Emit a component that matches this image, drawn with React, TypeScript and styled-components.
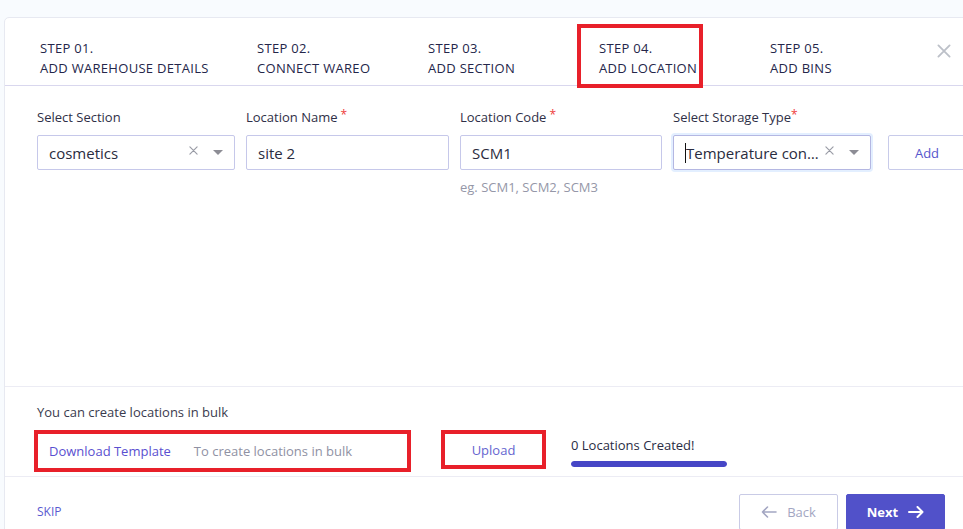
import React from 'react';
import styled, { createGlobalStyle } from 'styled-components';

const GlobalStyle = createGlobalStyle`
  html, body {
    margin: 0;
    padding: 0;
    background: #f8fbfe;
    overflow: hidden;
    font-family: "Open Sans", "Noto Sans", sans-serif;
  }
  *, *::before, *::after { box-sizing: border-box; }
`;

const Page = styled.div`
  width: 963px;
  height: 529px;
  padding: 17px 0 0 4px;
  overflow: hidden;
`;

const Card = styled.div`
  width: 1010px;
  background: #fff;
  border: 1px solid #e7e9f1;
  border-radius: 5px;
`;

const StepBar = styled.div`
  position: relative;
  display: grid;
  grid-template-columns: 217px repeat(4, 171px);
  align-items: start;
  padding: 20px 62px 7px 35px;
  border-bottom: 1px solid #d9d7ee;
`;

const Step = styled.div<{ $active?: boolean }>`
  position: relative;
  font-size: 13px;
  line-height: 20px;
  letter-spacing: 0.3px;
  color: #24264a;
  text-transform: uppercase;
  white-space: nowrap;
  &::after {
    content: '';
    display: ${p => (p.$active ? 'block' : 'none')};
    position: absolute;
    left: -22px;
    top: -14px;
    width: 126px;
    height: 64px;
    border: 4px solid #e8202a;
  }
`;

const Close = styled.button`
  position: absolute;
  top: 26px;
  right: 62px;
  padding: 0;
  border: none;
  background: none;
  display: flex;
`;

const FormSection = styled.div`
  height: 301px;
  padding: 22px 0 0 32px;
  border-bottom: 1px solid #ececf4;
`;

const FieldRow = styled.div`
  display: grid;
  grid-template-columns: 198px 203px 202px 198px auto;
  column-gap: 11px;
  align-items: start;
`;

const Field = styled.div`
  display: flex;
  flex-direction: column;
`;

const Label = styled.label`
  font-size: 13px;
  line-height: 18px;
  color: #2f3047;
  margin-bottom: 9px;
  white-space: nowrap;
`;

const Required = styled.span<{ $tight?: boolean }>`
  color: #ee3b3b;
  font-size: 12px;
  vertical-align: top;
  margin-left: ${p => (p.$tight ? '0' : '3px')};
  line-height: 14px;
`;

const InputBox = styled.div<{ $focused?: boolean }>`
  height: 35px;
  display: flex;
  align-items: center;
  padding: 0 10px 0 11px;
  border: 1px solid ${p => (p.$focused ? '#b4b7e2' : '#c6c8ea')};
  border-radius: 2px;
  background: #fff;
  box-shadow: ${p => (p.$focused ? '0 0 0 2px #e3efff' : 'none')};
  font-size: 15px;
  color: #2a2c40;
`;

const Value = styled.span<{ $caret?: boolean }>`
  flex: 1;
  min-width: 0;
  white-space: nowrap;
  overflow: hidden;
  text-overflow: ellipsis;
  border-left: ${p => (p.$caret ? '1px solid #111' : 'none')};
  line-height: 20px;
`;

const Clear = styled.span`
  display: flex;
  margin: -4px 15px 0 4px;
`;

const Caret = styled.span`
  width: 0;
  height: 0;
  border-left: 5px solid transparent;
  border-right: 5px solid transparent;
  border-top: 5px solid #8d8d95;
  margin-right: 1px;
`;

const Hint = styled.div`
  margin-top: 9px;
  font-size: 13px;
  line-height: 16px;
  color: #9597a8;
`;

const AddButton = styled.button`
  margin-left: 6px;
  margin-top: 27px;
  width: 78px;
  height: 35px;
  border: 1px solid #c8cbea;
  border-radius: 2px;
  background: #fff;
  color: #5656cc;
  font-family: inherit;
  font-size: 13px;
`;

const BulkSection = styled.div`
  height: 90px;
  padding: 16px 0 0 32px;
  border-bottom: 1px solid #ececf4;
`;

const BulkTitle = styled.div`
  font-size: 13px;
  line-height: 18px;
  color: #3a3b4e;
  margin-bottom: 9px;
`;

const BulkRow = styled.div`
  display: flex;
  align-items: flex-start;
  margin-left: -3px;
`;

const TemplateBox = styled.div<{ $marked?: boolean }>`
  width: 377px;
  height: 42px;
  display: flex;
  align-items: center;
  gap: 23px;
  padding: 0 0 0 11px;
  border: 4px solid ${p => (p.$marked ? '#e8202a' : 'transparent')};
  font-size: 13px;
`;

const LinkText = styled.span`
  color: #5a4fd0;
`;

const MutedText = styled.span`
  color: #8f91a3;
`;

const UploadBox = styled.button<{ $marked?: boolean }>`
  width: 105px;
  height: 39px;
  margin-left: 30px;
  border: 4px solid ${p => (p.$marked ? '#e8202a' : 'transparent')};
  background: #fff;
  color: #6565cf;
  font-family: inherit;
  font-size: 13px;
  padding: 0;
`;

const Progress = styled.div`
  margin-left: 25px;
  margin-top: 6px;
  width: 156px;
`;

const ProgressLabel = styled.div`
  font-size: 13px;
  line-height: 18px;
  color: #2a2c44;
`;

const Track = styled.div`
  margin-top: 7px;
  height: 6px;
  border-radius: 3px;
  background: #e5e5f5;
  overflow: hidden;
`;

const Fill = styled.div`
  height: 100%;
  border-radius: 3px;
  background: #4646c6;
`;

const Footer = styled.div`
  display: flex;
  align-items: flex-start;
  padding: 17px 68px 0 32px;
  height: 60px;
`;

const Skip = styled.button`
  margin-top: 9px;
  padding: 0;
  border: none;
  background: none;
  font-family: inherit;
  font-size: 12px;
  color: #5a5ad0;
`;

const NavButtons = styled.div`
  margin-left: auto;
  display: flex;
  gap: 8px;
`;

const NavButton = styled.button<{ $primary?: boolean }>`
  width: 99px;
  height: 36px;
  display: flex;
  align-items: center;
  justify-content: center;
  gap: 10px;
  border-radius: 2px;
  border: 1px solid ${p => (p.$primary ? '#5151c9' : '#c9cbe6')};
  background: ${p => (p.$primary ? '#5151c9' : '#fff')};
  color: ${p => (p.$primary ? '#fff' : '#a3a6c2')};
  font-family: inherit;
  font-size: 13px;
  font-weight: ${p => (p.$primary ? 700 : 400)};
`;

const steps = [
  { no: '01', title: 'Add warehouse details' },
  { no: '02', title: 'Connect wareo' },
  { no: '03', title: 'Add section' },
  { no: '04', title: 'Add location', active: true },
  { no: '05', title: 'Add bins' },
];

const CrossIcon = ({ size, color, width = 1.6 }: { size: number; color: string; width?: number }) => (
  <svg width={size} height={size} viewBox="0 0 10 10" fill="none">
    <path d="M1 1L9 9M9 1L1 9" stroke={color} strokeWidth={width} strokeLinecap="round" />
  </svg>
);

const Arrow = ({ dir, color }: { dir: 'left' | 'right'; color: string }) => (
  <svg width="16" height="12" viewBox="0 0 16 12" fill="none">
    {dir === 'left' ? (
      <path d="M15 6H1.5M6.5 1L1.5 6L6.5 11" stroke={color} strokeWidth="1.6" strokeLinecap="round" strokeLinejoin="round" />
    ) : (
      <path d="M1 6H14.5M9.5 1L14.5 6L9.5 11" stroke={color} strokeWidth="2" strokeLinecap="round" strokeLinejoin="round" />
    )}
  </svg>
);

function App() {
  return (
    <Page>
      <GlobalStyle />
      <Card>
        <StepBar>
          {steps.map(s => (
            <Step key={s.no} $active={s.active}>
              <div>Step {s.no}.</div>
              <div>{s.title}</div>
            </Step>
          ))}
          <Close aria-label="close">
            <CrossIcon size={14} color="#bcc0c8" width={1.3} />
          </Close>
        </StepBar>

        <FormSection>
          <FieldRow>
            <Field>
              <Label>Select Section</Label>
              <InputBox>
                <Value>cosmetics</Value>
                <Clear><CrossIcon size={9} color="#9a9ca6" width={1.3} /></Clear>
                <Caret />
              </InputBox>
            </Field>
            <Field>
              <Label>Location Name<Required>*</Required></Label>
              <InputBox>
                <Value>site 2</Value>
              </InputBox>
            </Field>
            <Field>
              <Label>Location Code<Required>*</Required></Label>
              <InputBox>
                <Value>SCM1</Value>
              </InputBox>
              <Hint>eg. SCM1, SCM2, SCM3</Hint>
            </Field>
            <Field>
              <Label>Select Storage Type<Required $tight>*</Required></Label>
              <InputBox $focused>
                <Value $caret>Temperature controlled</Value>
                <Clear><CrossIcon size={9} color="#9a9ca6" width={1.3} /></Clear>
                <Caret />
              </InputBox>
            </Field>
            <AddButton>Add</AddButton>
          </FieldRow>
        </FormSection>

        <BulkSection>
          <BulkTitle>You can create locations in bulk</BulkTitle>
          <BulkRow>
            <TemplateBox $marked>
              <LinkText>Download Template</LinkText>
              <MutedText>To create locations in bulk</MutedText>
            </TemplateBox>
            <UploadBox $marked>Upload</UploadBox>
            <Progress>
              <ProgressLabel>0 Locations Created!</ProgressLabel>
              <Track>
                <Fill style={{ width: '100%' }} />
              </Track>
            </Progress>
          </BulkRow>
        </BulkSection>

        <Footer>
          <Skip>SKIP</Skip>
          <NavButtons>
            <NavButton>
              <Arrow dir="left" color="#a3a6c2" />
              Back
            </NavButton>
            <NavButton $primary>
              Next
              <Arrow dir="right" color="#fff" />
            </NavButton>
          </NavButtons>
        </Footer>
      </Card>
    </Page>
  );
}

export default App;
